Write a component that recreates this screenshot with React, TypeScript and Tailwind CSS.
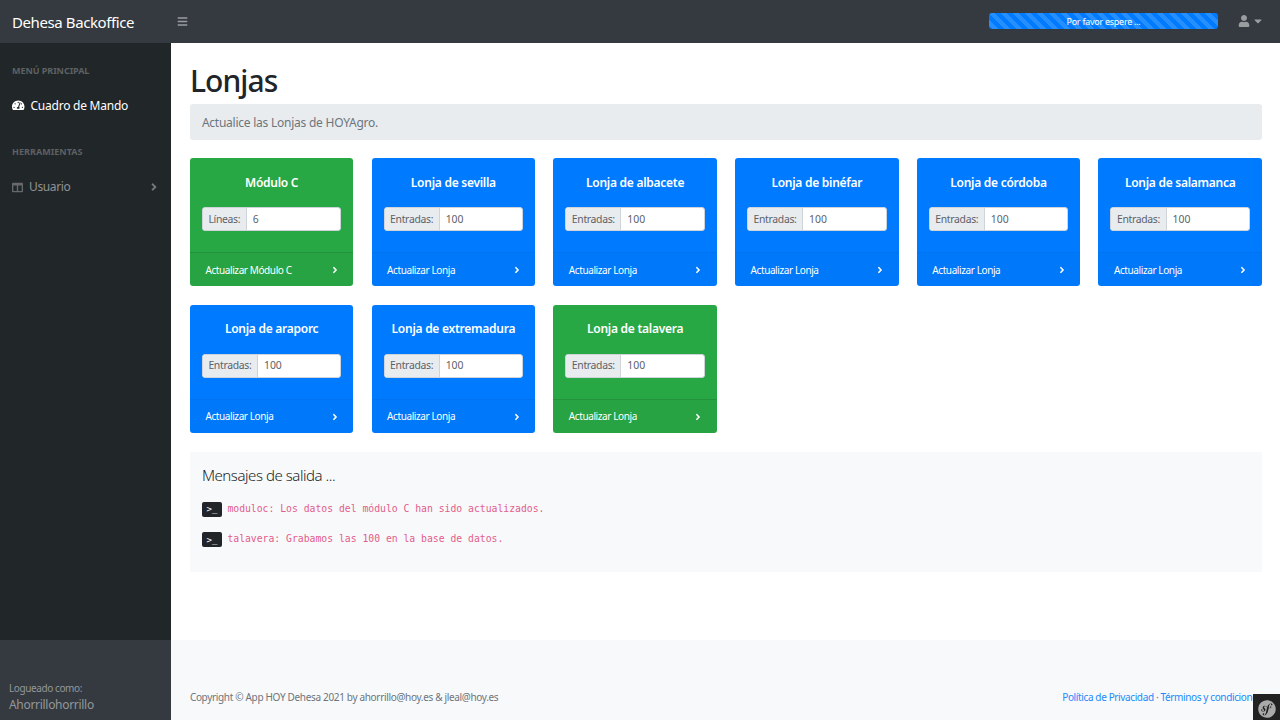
import { FaAngleRight, FaBars, FaCaretDown, FaColumns, FaSymfony, FaTachometerAlt, FaUser } from "react-icons/fa";

type Market = { title: string; label: string; value: string; action: string; done?: boolean };

const market = (name: string, done = false): Market => ({
  title: `Lonja de ${name}`,
  label: "Entradas:",
  value: "100",
  action: "Actualizar Lonja",
  done,
});

const markets: Market[] = [
  { title: "Módulo C", label: "Líneas:", value: "6", action: "Actualizar Módulo C", done: true },
  market("sevilla"),
  market("albacete"),
  market("binéfar"),
  market("córdoba"),
  market("salamanca"),
  market("araporc"),
  market("extremadura"),
  market("talavera", true),
];

const messages = [
  "moduloc: Los datos del módulo C han sido actualizados.",
  "talavera: Grabamos las 100 en la base de datos.",
];

function MarketCard({ title, label, value, action, done }: Market) {
  return (
    <article className={`flex h-32 flex-col overflow-hidden rounded-[3px] text-white ${done ? "bg-[#28a745]" : "bg-[#007bff]"}`}>
      <div className="flex-1 px-3 pt-[15.5px]">
        <h2 className="text-center text-[12px] leading-[18px] font-semibold tracking-[-0.022em] whitespace-nowrap">{title}</h2>
        <div className="mt-[15.5px] flex h-6 overflow-hidden rounded-[3px] border border-[#ced4da] bg-white text-[10.4px] tracking-[-0.03em] text-[#5b6167]">
          <span className="flex items-center border-r border-[#ced4da] bg-[#e9ecef] px-[5.5px] pt-px">{label}</span>
          <input className="w-full min-w-0 px-[6px] pt-px tracking-normal outline-none" defaultValue={value} />
        </div>
      </div>
      <div className={`flex h-[34px] items-center justify-between border-t bg-black/[0.02] pt-px pr-[13.5px] pl-[15.5px] text-[10px] tracking-[-0.04em] ${done ? "border-black/10" : "border-black/[0.04]"}`}>
        <a>{action}</a>
        <FaAngleRight className="size-[10px]" />
      </div>
    </article>
  );
}

export default function App() {
  return (
    <div className="relative flex h-[720px] w-[1280px] flex-col overflow-hidden bg-white font-['Noto_Sans','Open_Sans',sans-serif] text-[#212529]">
      <header className="flex h-[42.5px] shrink-0 items-center bg-[#343a40]">
        <span className="w-[177px] pt-px pl-3 text-[15px] tracking-[-0.027em] text-white">Dehesa Backoffice</span>
        <FaBars className="size-[11px] text-[#9a9da0]" />
        <div className="ml-auto flex h-4 w-[229px] items-center justify-center rounded-[3px] bg-[#007bff] bg-[linear-gradient(45deg,rgba(255,255,255,.15)_25%,transparent_25%,transparent_50%,rgba(255,255,255,.15)_50%,rgba(255,255,255,.15)_75%,transparent_75%)] bg-[size:12px_12px] text-[9px] tracking-[-0.03em] text-white">
          Por favor espere ...
        </div>
        <FaUser className="ml-[19.5px] size-3 text-[#9a9da0]" />
        <FaCaretDown className="mr-4 ml-[2.5px] size-3 text-[#9a9da0]" />
      </header>
      <div className="flex min-h-0 flex-1">
        <aside className="flex w-[171.4px] shrink-0 flex-col bg-[#212629]">
          <nav className="flex-1 px-3 pt-[20.5px]">
            <p className="text-[9px] leading-4 font-bold tracking-[-0.005em] text-[#5d6163]">MENÚ PRINCIPAL</p>
            <a className="mt-[17.5px] flex h-[18px] items-center text-[12px] tracking-[-0.02em] text-white">
              <FaTachometerAlt className="mr-[6px] size-[12.5px]" />
              Cuadro de Mando
            </a>
            <p className="mt-[29px] text-[9px] leading-4 font-bold tracking-[0.005em] text-[#5d6163]">HERRAMIENTAS</p>
            <a className="mt-[18.5px] flex h-[18px] items-center text-[12px] tracking-[-0.03em] text-[#909294]">
              <FaColumns className="mr-[6px] size-[11px] text-[#65696b]" />
              Usuario
              <FaAngleRight className="ml-auto size-3 -mr-px text-[#76797c]" />
            </a>
          </nav>
          <div className="h-20 bg-[#343a40] pt-10 pl-[9px] text-[#94979a]">
            <p className="text-[10px] leading-4 tracking-[-0.04em]">Logueado como:</p>
            <p className="pt-px text-[12px] leading-4 tracking-[-0.025em]">Ahorrillohorrillo</p>
          </div>
        </aside>
        <div className="flex min-w-0 flex-1 flex-col">
          <main className="flex-1 pt-[20.5px] pr-[18px] pl-[18.5px]">
            <h1 className="text-[30px] leading-9 font-medium tracking-[-0.03em]">Lonjas</h1>
            <div className="mt-[5px] flex h-9 items-center rounded-[3px] bg-[#e9ecef] px-3 pt-px text-[12px] tracking-[-0.02em] text-[#6c757d]">
              Actualice las Lonjas de HOYAgro.
            </div>
            <section className="mt-[18.2px] grid grid-cols-6 gap-x-[18.2px] gap-y-[18.4px]">
              {markets.map((item) => (
                <MarketCard key={item.title} {...item} />
              ))}
            </section>
            <section className="mt-[19.3px] h-[120.5px] bg-[#f8f9fa] px-3 pt-[11px]">
              <h2 className="mb-[13.5px] text-[15px] leading-6 font-light tracking-[-0.03em]">Mensajes de salida ...</h2>
              {messages.map((message) => (
                <p key={message} className="mb-[12.8px] flex h-[17.5px] items-center text-[#e35d8c]">
                  <kbd className="mr-[5.5px] flex h-[15px] w-5 items-center justify-center rounded-[2px] bg-[#212529] pt-0.5 font-['DejaVu_Sans_Mono',monospace] text-[9px] text-white">&gt;_</kbd>
                  <code className="font-['DejaVu_Sans_Mono',monospace] text-[9.75px]">{message}</code>
                </p>
              ))}
            </section>
          </main>
          <footer className="flex h-20 items-start justify-between bg-[#f8f9fa] pt-[49px] pr-[18px] pl-[18.5px] text-[10px] leading-4 tracking-[-0.033em] whitespace-nowrap">
            <span className="text-[#6c757d]">Copyright © App HOY Dehesa 2021 by ahorrillo@hoy.es &amp; jleal@hoy.es</span>
            <span className="tracking-[-0.037em] text-[#6c757d]">
              <a className="text-[#2389fa]">Política de Privacidad</a> · <a className="text-[#2389fa]">Términos y condiciones</a>
            </span>
          </footer>
        </div>
      </div>
      <div className="absolute right-0 bottom-0 flex h-[26px] w-[27px] items-center justify-center bg-[#222] pt-1">
        <FaSymfony className="size-[18px] text-[#aaa]" />
      </div>
    </div>
  );
}
